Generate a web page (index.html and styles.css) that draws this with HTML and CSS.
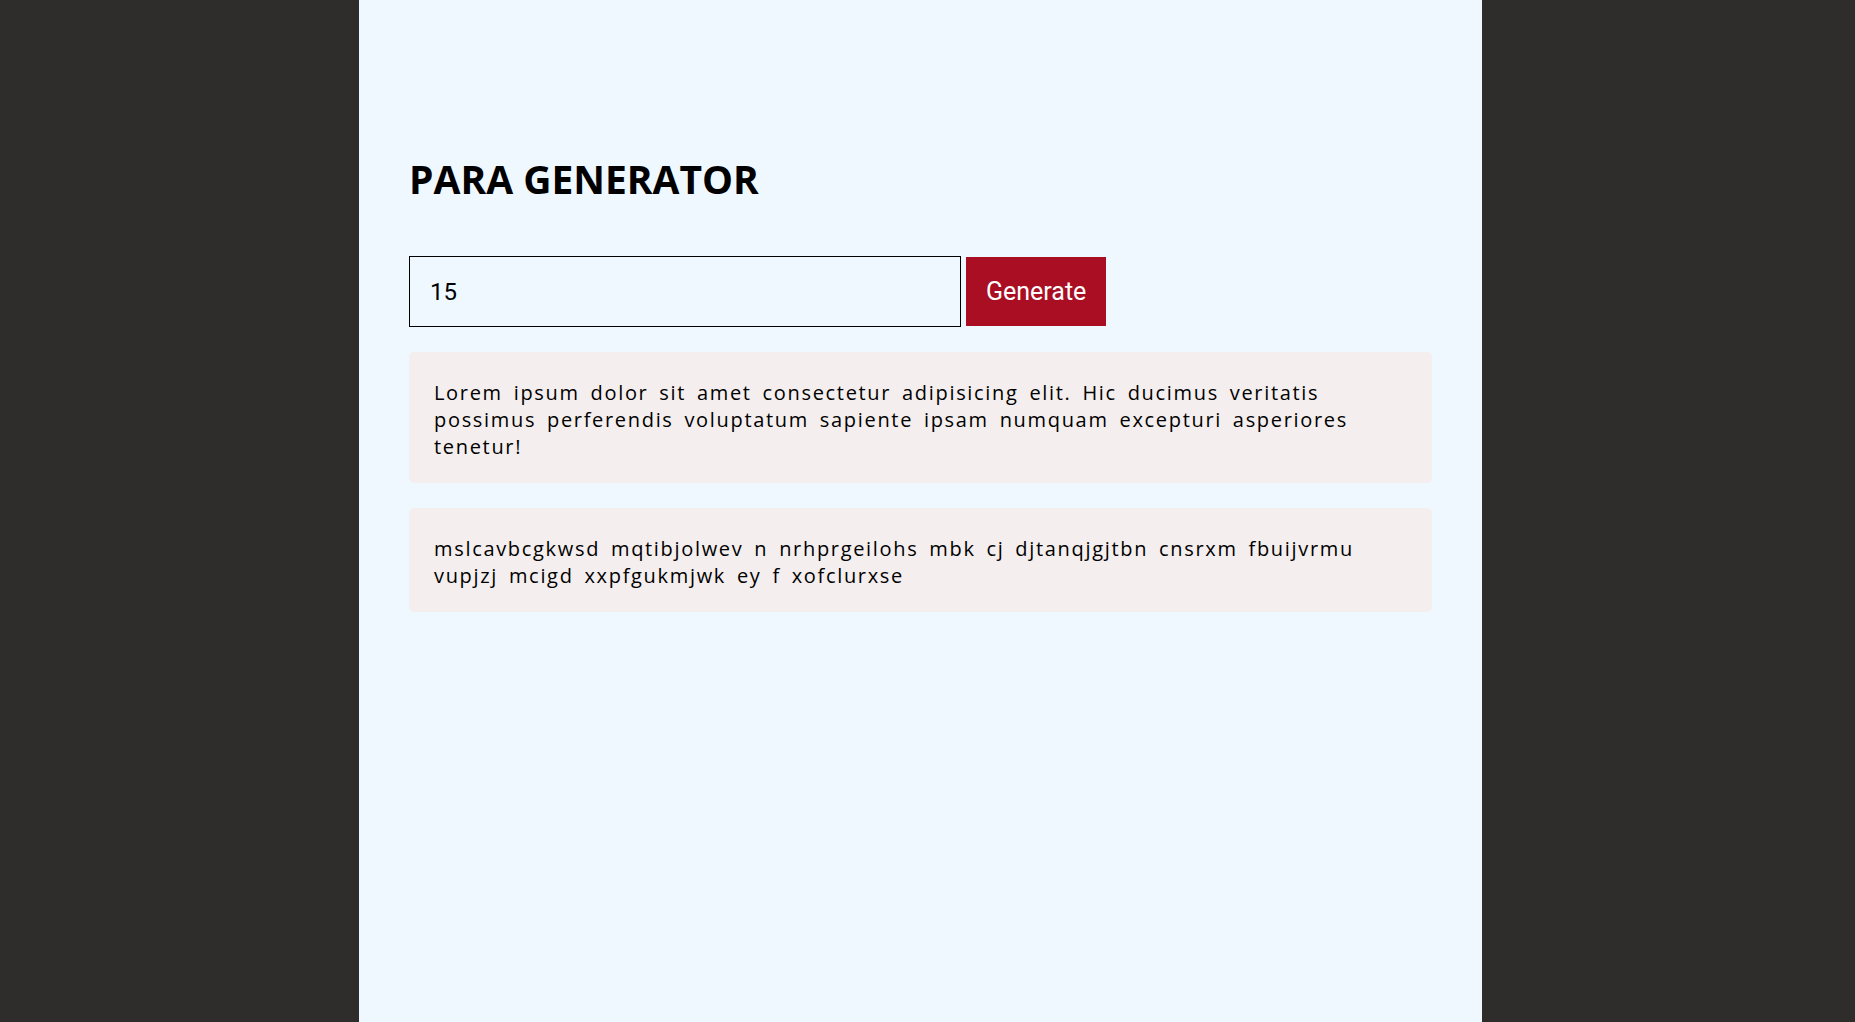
FILE: index.html
```html
<!DOCTYPE html>
<html lang="en">
<head>
<meta charset="utf-8">
<title>Para Generator</title>
<link rel="stylesheet" href="styles.css">
</head>
<body>
  <main class="panel">
    <h1 class="title">PARA GENERATOR</h1>
    <form class="form">
      <input class="count" type="number" value="15">
      <button class="generate" type="button">Generate</button>
    </form>
    <p class="para">Lorem ipsum dolor sit amet consectetur adipisicing elit. Hic ducimus veritatis possimus perferendis voluptatum sapiente ipsam numquam excepturi asperiores tenetur!</p>
    <p class="para">mslcavbcgkwsd mqtibjolwev n nrhprgeilohs mbk cj djtanqjgjtbn cnsrxm fbuijvrmu vupjzj mcigd xxpfgukmjwk ey f xofclurxse</p>
  </main>
</body>
</html>
```

FILE: styles.css
```css
* {
  box-sizing: border-box;
}

html, body {
  margin: 0;
  height: 100%;
}

body {
  background: #2e2d2b;
  font-family: "Open Sans", "Noto Sans", sans-serif;
  color: #000;
}

.panel {
  width: 1123px;
  min-height: 100%;
  margin-left: 359px;
  background: #f0f8ff;
  padding: 156px 50px 40px;
}

.title {
  margin: 0 0 54px;
  font-size: 39px;
  line-height: 46px;
  font-weight: 700;
  color: #000;
}

.form {
  display: flex;
  align-items: center;
  gap: 5px;
  margin: 0 0 25px;
}

.count {
  width: 552px;
  height: 71px;
  border: 1px solid #000;
  background: #f0f8ff;
  padding: 0 20px;
  font-family: Roboto, "Liberation Sans", sans-serif;
  font-size: 24px;
  color: #000;
  outline: none;
  -moz-appearance: textfield;
}

.count::-webkit-inner-spin-button,
.count::-webkit-outer-spin-button {
  -webkit-appearance: none;
  margin: 0;
}

.generate {
  height: 69px;
  padding: 0 20px;
  border: none;
  background: #a90e23;
  color: #fff;
  font-family: Roboto, "Liberation Sans", sans-serif;
  font-size: 25px;
  cursor: pointer;
}

.para {
  margin: 0 0 25px;
  padding: 27px 25px 23px;
  background: #f4eeee;
  border-radius: 5px;
  font-size: 20px;
  line-height: 27px;
  letter-spacing: 1.68px;
  word-spacing: 4px;
}
```
